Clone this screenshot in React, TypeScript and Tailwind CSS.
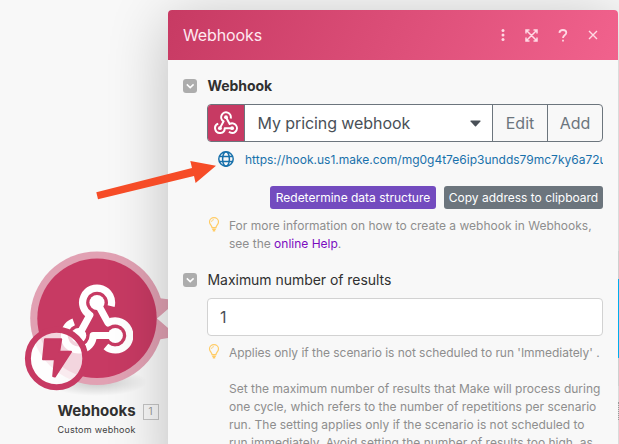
import type { ReactNode } from "react";

function WebhookGlyph({ className, strokeWidth = 7.2, ball = 7.6 }: { className?: string; strokeWidth?: number; ball?: number }) {
  return (
    <svg viewBox="0 0 72 70" className={className} fill="none" stroke="#fff" strokeWidth={strokeWidth} strokeLinejoin="round">
      <path d="M50.1 22.2A14.5 14.5 0 1 0 28.8 31.1L17.7 51.5" />
      <path d="M36 18.5L47.1 38.9A14.5 14.5 0 1 1 44.9 62.5" />
      <path d="M54.3 51.5H32.2A14.5 14.5 0 1 1 12.7 37.9" />
      <g fill="#fff" stroke="none">
        <circle cx="36" cy="18.5" r={ball} />
        <circle cx="54.3" cy="51.5" r={ball} />
        <circle cx="17.7" cy="51.5" r={ball} />
      </g>
    </svg>
  );
}

function WebhookNode() {
  return (
    <div className="absolute left-[20px] top-[246px] w-[154px]">
      <div className="relative h-[150px]">
        <svg viewBox="20 246 154 150" className="block h-[150px] w-[154px]">
          <defs>
            <radialGradient id="ground">
              <stop offset="0" stopColor="#000" stopOpacity="0.2" />
              <stop offset="1" stopColor="#000" stopOpacity="0" />
            </radialGradient>
          </defs>
          <ellipse cx="97" cy="382" rx="50" ry="14" fill="url(#ground)" />
          <path d="M150 297L174 300V304L158 318.5L174 333V337L150 341Z" fill="#e1a1b3" />
          <circle cx="97" cy="318.3" r="66.8" fill="#e1a1b3" />
          <path d="M157 318.5L174 304V333Z" fill="#f8f8f8" />
          <circle cx="97" cy="318.3" r="59.7" fill="#c73a63" />
        </svg>
        <WebhookGlyph className="absolute left-[41px] top-[37.5px] h-[70px] w-[72px]" />
        <svg viewBox="24 326 66 66" className="absolute left-[4px] top-[80px] size-[66px]">
          <circle cx="56.6" cy="358.5" r="28.7" fill="#fff" fillOpacity="0.79" stroke="#c73a63" strokeWidth="6" />
          <path d="M45 339.3H61.2L59.2 351.8H71L54.8 376.6L53.2 376L54.9 359.3H43Z" fill="#c73a63" stroke="#c73a63" strokeWidth="2" strokeLinejoin="round" />
        </svg>
      </div>
      <div className="flex h-[31px] items-center gap-[7px] pl-[37.5px]">
        <span className="text-[15px] font-bold text-[#303030]">Webhooks</span>
        <span className="flex h-[16px] w-[16px] items-center justify-center border border-[#c4c4c4] text-[10px] text-[#999]">1</span>
      </div>
      <div className="-mt-[4px] pl-[37.5px] text-[9px] leading-[14px] tracking-[0.27px] text-[#404040]">Custom webhook</div>
    </div>
  );
}

function Toggle() {
  return (
    <span className="flex size-[14px] items-center justify-center rounded-[3px] bg-[#adadad]">
      <svg viewBox="0 0 14 14" className="size-[14px]" fill="none" stroke="#fff" strokeWidth="1.5">
        <path d="M3.8 5.4L7.2 8.6L10.6 5.4" />
      </svg>
    </span>
  );
}

function FieldLabel({ children }: { children: ReactNode }) {
  return (
    <div className="flex h-5 items-center gap-[10.5px]">
      <Toggle />
      {children}
    </div>
  );
}

function Bulb() {
  return (
    <svg viewBox="0 0 12 15" className="h-[15px] w-[12px] shrink-0" fill="none" stroke="#ffcc66" strokeWidth="1.2">
      <path d="M4 10.6C4 8.6 1.5 7.6 1.5 4.9A4.5 4.3 0 0 1 10.5 4.9C10.5 7.6 8 8.6 8 10.6Z" />
      <path d="M3.5 5A2.6 2.4 0 0 1 6 2.6" strokeWidth="0.8" />
      <path d="M4.2 12.2H7.8M4.8 13.7H7.2" strokeWidth="1.4" />
    </svg>
  );
}

function Globe() {
  return (
    <svg viewBox="0 0 16 16" className="size-[16px] shrink-0" fill="none" stroke="#1871ab" strokeWidth="1.5">
      <circle cx="8" cy="8" r="7.2" />
      <ellipse cx="8" cy="8" rx="3.4" ry="7.2" />
      <path d="M1.2 5.5H14.8M1.2 10.5H14.8" />
    </svg>
  );
}

function HeaderIcons() {
  return (
    <div className="flex items-center text-[#ffd9e4]">
      <svg viewBox="0 0 4 12" className="h-[12px] w-[4px]" fill="currentColor">
        <circle cx="2" cy="1.5" r="1.5" />
        <circle cx="2" cy="6" r="1.5" />
        <circle cx="2" cy="10.5" r="1.5" />
      </svg>
      <svg viewBox="0 0 13 13" className="ml-[20.5px] size-[13px]" fill="none" stroke="currentColor" strokeWidth="1.5">
        <path d="M1 4.5V1H4.5M8.5 1H12V4.5M12 8.5V12H8.5M4.5 12H1V8.5M1 1L12 12M12 1L1 12" />
      </svg>
      <svg viewBox="0 0 10 13" className="ml-[20px] h-[13px] w-[10px]" fill="none" stroke="currentColor" strokeWidth="1.8">
        <path d="M1.4 3.8C1.6 1.8 3 1 4.9 1C7 1 8.3 2.1 8.3 3.8C8.3 6 5 6 5 9" />
        <path d="M5 10.8V12.5" />
      </svg>
      <svg viewBox="0 0 10 10" className="ml-[20px] size-[10px]" fill="none" stroke="currentColor" strokeWidth="1.4">
        <path d="M1 1L9 9M9 1L1 9" />
      </svg>
    </div>
  );
}

const helpLines = [
  "Set the maximum number of results that Make will process during",
  "one cycle, which refers to the number of repetitions per scenario",
  "run. The setting applies only if the scenario is not scheduled to",
  "run immediately. Avoid setting the number of results too high, as",
];

function WebhookPanel() {
  return (
    <section className="absolute left-[168px] top-[10px] h-[480px] w-[450px] overflow-hidden rounded-t-[4px] bg-[#f8f8f8]">
      <header className="flex h-[50px] items-center justify-between bg-[linear-gradient(115deg,#c73a63,#f1628d)] pl-[15px] pr-[20px]">
        <h1 className="text-[16px] tracking-[-0.12px] text-[#ffe9f0]">Webhooks</h1>
        <HeaderIcons />
      </header>
      <div className="whitespace-nowrap pl-[15px] pr-[15px] pt-4">
        <FieldLabel>
          <span className="pb-[2px] text-[14px] font-bold tracking-[-0.05px] text-[#303030]">Webhook</span>
        </FieldLabel>
        <div className="pl-[24px]">
          <div className="mt-2 flex h-[38px] overflow-hidden rounded-[4px] border border-[#6c757d] text-[16px]">
            <div className="-my-px -ml-px flex w-[38px] items-center justify-center border-r border-[#6c757d] bg-[#c73a63]">
              <WebhookGlyph className="h-[23.3px] w-[24px]" strokeWidth={6} ball={5.8} />
            </div>
            <div className="flex flex-1 items-center justify-between bg-white pl-[12.5px] pr-[11px] tracking-[-0.08px] text-[#495057]">
              My pricing webhook
              <svg viewBox="0 0 11 7" className="h-[7px] w-[11px]" fill="#495057">
                <path d="M0.8 0.5H10.2Q11 0.8 10.4 1.5L6 6.2Q5.5 6.6 5 6.2L0.6 1.5Q0 0.8 0.8 0.5Z" />
              </svg>
            </div>
            <div className="flex w-[55px] items-center justify-center border-l border-[#6c757d] text-[#6c757d]">Edit</div>
            <div className="flex w-[55px] items-center justify-center border-l border-[#6c757d] text-[#6c757d]">Add</div>
          </div>
          <div className="mt-2 flex h-[18px] items-center gap-[11px] overflow-hidden pl-[11px] text-[12px] text-[#1871ab]">
            <Globe />
            <span className="pt-[2px]">https://hook.us1.make.com/mg0g4t7e6ip3undds79mc7ky6a72u</span>
          </div>
          <div className="mt-[18px] flex justify-end gap-2 text-[12px] text-white">
            <button className="h-[23px] w-[166px] rounded-[3px] bg-[#734bbf]">Redetermine data structure</button>
            <button className="h-[23px] w-[159px] rounded-[3px] bg-[#6c757d]">Copy address to clipboard</button>
          </div>
          <div className="mt-2 flex gap-[9px] pl-px text-[12px] leading-[18px] text-[#8e8e8e]">
            <Bulb />
            <p>
              For more information on how to create a webhook in Webhooks,
              <br />
              see the <a className="text-[#7a0bc0]">online Help</a>.
            </p>
          </div>
        </div>
        <div className="mt-[17px]">
          <FieldLabel>
            <span className="pb-[2px] text-[14px] tracking-[-0.04px] text-[#303030]">Maximum number of results</span>
          </FieldLabel>
        </div>
        <div className="pl-[24px]">
          <div className="mt-2 flex h-[38px] items-center rounded-[4px] border border-[#d2d2d2] bg-white pl-3 text-[16px] text-[#495057]">1</div>
          <div className="mt-2 flex gap-[9px] pl-px text-[12px] leading-[18px] text-[#8e8e8e]">
            <Bulb />
            <div>
              <p className="mb-[18px] tracking-[-0.035px]">Applies only if the scenario is not scheduled to run 'Immediately' .</p>
              {helpLines.map((line) => (
                <p key={line}>{line}</p>
              ))}
            </div>
          </div>
        </div>
      </div>
    </section>
  );
}

export default function App() {
  return (
    <main className="relative h-[444px] w-[619px] overflow-hidden bg-[#f8f8f8] font-['Inter','Liberation_Sans',sans-serif]">
      <WebhookNode />
      <div className="absolute left-[168px] top-[10px] h-[480px] w-[450px] rounded-[4px] shadow-[0_10px_60px_rgba(0,0,0,0.24)]" />
      <div className="absolute right-0 top-[251px] flex w-px flex-col">
        <div className="h-[28px] bg-[#cfcfcf]" />
        <div className="h-[79px] bg-[#00aeef]" />
        <div className="h-[28px] bg-[#cfcfcf]" />
        <div className="mt-[16px] h-[18px] border-r border-dotted border-[#999]" />
      </div>
      <WebhookPanel />
      <svg viewBox="90 155 130 50" className="absolute left-[90px] top-[155px] h-[50px] w-[130px]" fill="#f64c27">
        <path d="M96.3 192.3L192 168L190.3 161L216 165.8L195.6 183L194 176L98 199.2Z" />
      </svg>
    </main>
  );
}
